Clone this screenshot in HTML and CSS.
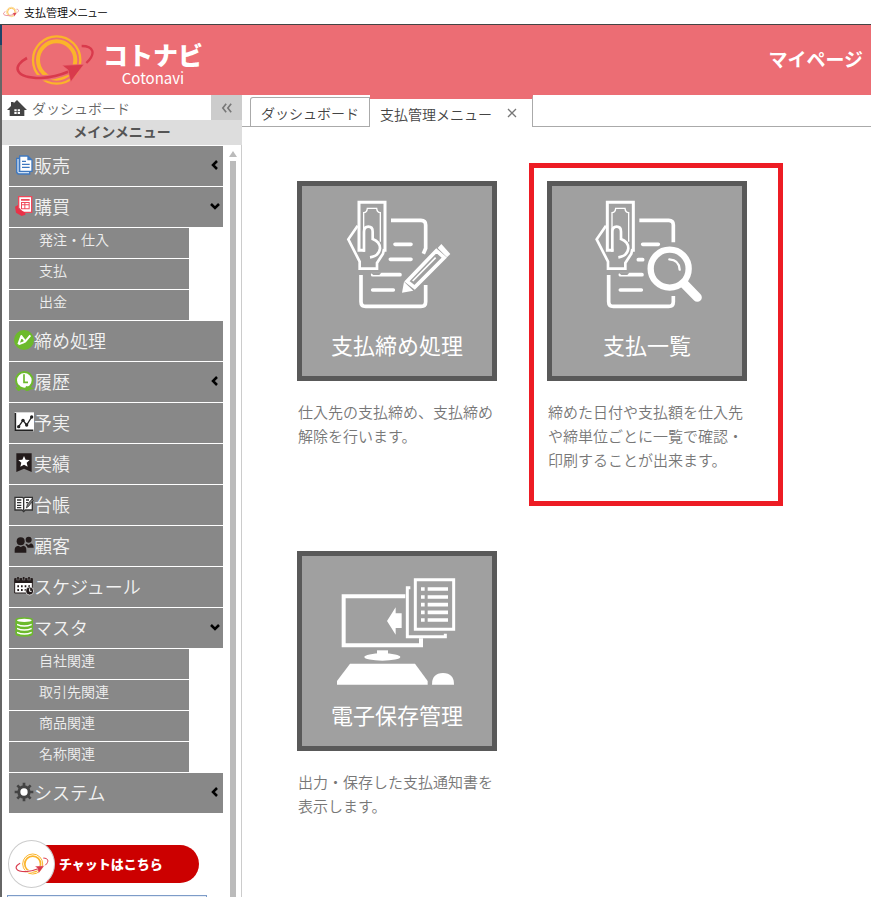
FILE: index.html
```html
<!DOCTYPE html>
<html lang="ja">
<head>
<meta charset="utf-8">
<meta name="viewport" content="width=device-width, initial-scale=1">
<title>支払管理メニュー</title>
<link rel="stylesheet" href="styles.css">
</head>
<body>
<svg class="defs" aria-hidden="true">
  <symbol id="logo" viewBox="45 100 240 156">
    <g fill="none">
      <circle cx="170" cy="178" r="71" stroke="#fbb42a" stroke-width="7"/>
      <circle cx="170" cy="178" r="56" stroke="#fbb42a" stroke-width="12"/>
      <path d="M78 173C36 196 42 232 122 232C150 231 180 224 204 214" stroke="currentColor" stroke-width="17"/>
      <path d="M81 172C36 196 42 232 122 232C150 231 180 224 208 212" stroke="#d93a4c" stroke-width="8"/>
      <path d="M245 136C280 136 290 158 259 187" stroke="#d93a4c" stroke-width="7"/>
    </g>
    <path d="M252 191L186 194L204 208L212 244Z" fill="#d93a4c" stroke="currentColor" stroke-width="2"/>
  </symbol>
  <symbol id="hand" viewBox="0 0 600 600" overflow="visible">
    <g fill="none" stroke="#fff" stroke-width="8">
      <path d="M225 226H207V82H285V230" stroke-width="9"/>
      <path d="M221 218V113Q231 112 232 100H260Q261 112 271 113V200" stroke-width="4"/>
      <path d="M203 152L175 193L209 260V281H261V264L279 236L282 222"/>
      <path d="M222 230V170Q222 155 235 155Q248 155 248 170V192Q270 200 270 220Q267 243 240 247"/>
    </g>
  </symbol>
</svg>

<div class="titlebar">
  <svg class="titlebar-logo" aria-hidden="true"><use href="#logo"/></svg>
  <span>支払管理メニュー</span>
</div>

<div class="window">
  <header class="header">
    <a class="brand" href="#">
      <svg class="brand-mark" aria-hidden="true"><use href="#logo"/></svg>
      <span class="brand-text">
        <span class="brand-name">コトナビ</span>
        <span class="brand-sub">Cotonavi</span>
      </span>
    </a>
    <a class="mypage" href="#">マイページ</a>
  </header>

  <div class="body">
    <aside class="sidebar">
      <div class="dash">
        <a class="dash-link" href="#">
          <svg class="home" viewBox="0 0 60 48" aria-hidden="true"><path d="M30 0L60 30H52V48H8V30H0L12 18V6H20V10Z" fill="#444"/><path d="M22 28h7v6h-7zM32 28h7v6h-7zM22 36h7v6h-7zM32 36h7v6h-7z" fill="#fff"/></svg>
          ダッシュボード
        </a>
        <button class="collapse" type="button" aria-label="メニューを閉じる">
          <svg viewBox="0 0 14 12" aria-hidden="true"><path d="M6 1L2 6L6 11M12 1L8 6L12 11" fill="none" stroke="#777" stroke-width="2"/></svg>
        </button>
      </div>
      <h2 class="menu-title">メインメニュー</h2>
      <div class="menu-area">
        <div class="menu-main">
          <ul class="menu">
            <li><button class="item" type="button">
              <svg class="icon" viewBox="0 0 60 60" aria-hidden="true"><path d="M6 8H15V1H42L56 14V51H49V59H12L6 53Z" fill="#3f78bf"/><path d="M19 5H40V16H52V47H19Z" fill="#fff"/><path d="M10 12H14V51H45V55H14L10 51Z" fill="#cfe0f3"/><path d="M42 4L53 15H42ZM24 17H36V21H24ZM24 26H47V30H24ZM24 35H47V39H24Z" fill="#3f78bf"/></svg>
              販売<svg class="chev" viewBox="0 0 12 12" aria-hidden="true"><path d="M8 2L4 6L8 10"/></svg></button></li>
            <li><button class="item" type="button">
              <svg class="icon" viewBox="0 0 60 60" aria-hidden="true"><path d="M12 0H55V51H30L12 34Z" fill="#f0485a"/><path d="M16 4H51V47H24L16 34Z" fill="#fff"/><path d="M21 9H47V14H21ZM21 18H47V40H21Z" fill="#f0485a"/><path d="M24 21H31V25H24ZM34 21H44V25H34ZM24 28H31V37H24ZM34 28H44V37H34Z" fill="#fff"/><path d="M3 32L12 27V36L34 50V56L23 60L6 50Z" fill="#e93248"/></svg>
              購買<svg class="chev" viewBox="0 0 12 12" aria-hidden="true"><path d="M2 4L6 8L10 4"/></svg></button>
              <ul class="submenu">
                <li><a href="#">発注・仕入</a></li>
                <li><a href="#">支払</a></li>
                <li><a href="#">出金</a></li>
              </ul></li>
            <li><a class="item" href="#">
              <svg class="icon" viewBox="0 0 60 60" aria-hidden="true"><circle cx="30" cy="30" r="30" fill="#6cba2c"/><path d="M13 43L22 18L34 34L49 16M13 43L27 38L34 34" fill="none" stroke="#fff" stroke-width="6" stroke-linejoin="round"/></svg>
              締め処理</a></li>
            <li><button class="item" type="button">
              <svg class="icon" viewBox="0 0 60 60" aria-hidden="true"><circle cx="31" cy="28" r="25" fill="#fff" stroke="#6cba2c" stroke-width="6"/><path d="M30 10V34H42" fill="none" stroke="#6cba2c" stroke-width="5"/><path d="M14 42V59M6 49L14 58L24 49M54 52L37 59L38 48Z" fill="none" stroke="#6cba2c" stroke-width="5"/></svg>
              履歴<svg class="chev" viewBox="0 0 12 12" aria-hidden="true"><path d="M8 2L4 6L8 10"/></svg></button></li>
            <li><a class="item" href="#">
              <svg class="icon" viewBox="0 0 60 60" aria-hidden="true"><path d="M2 1H60V58H2Z" fill="#fff"/><path d="M4 3V55H58" fill="none" stroke="#222" stroke-width="5"/><path d="M14 44L27 25L38 39L53 15" fill="none" stroke="#222" stroke-width="4"/><g fill="#222"><circle cx="14" cy="44" r="5"/><circle cx="27" cy="25" r="5"/><circle cx="38" cy="39" r="5"/><circle cx="53" cy="15" r="5"/></g></svg>
              予実</a></li>
            <li><a class="item" href="#">
              <svg class="icon" viewBox="0 0 60 60" aria-hidden="true"><path d="M7 1H53V57L30 47L7 57Z" fill="#231b1b"/><path d="M30 9L35 20L47 21L38 29L41 41L30 35L19 41L22 29L13 21L25 20Z" fill="#fff"/></svg>
              実績</a></li>
            <li><a class="item" href="#">
              <svg class="icon" viewBox="0 0 60 60" aria-hidden="true"><path d="M3 10H25L29 13L33 10H55V48H34L29 53L24 48H3Z" fill="#fff" stroke="#333" stroke-width="4"/><path d="M29 14V50M9 18H22M9 26H22M9 34H22M9 41H22M36 18H45M36 26H42" stroke="#333" stroke-width="4"/><path d="M37 42L40 31L54 15L58 19L44 37Z" fill="#777" stroke="#222" stroke-width="2"/></svg>
              台帳</a></li>
            <li><a class="item" href="#">
              <svg class="icon" viewBox="0 0 60 60" aria-hidden="true"><g fill="#231b1b"><circle cx="20" cy="19" r="12"/><path d="M2 53V44Q2 33 13 32L20 36L28 32Q37 34 37 44V53Z"/><circle cx="44" cy="14" r="9"/><path d="M37 26L44 30L51 25Q59 28 59 38H41Q39 32 34 29Z"/></g></svg>
              顧客</a></li>
            <li><a class="item" href="#">
              <svg class="icon" viewBox="0 0 60 60" aria-hidden="true"><path d="M2 8H55V51H2Z" fill="#fff" stroke="#231b1b" stroke-width="3"/><path d="M2 7H56V21H2Z" fill="#231b1b"/><path d="M12 2V13M29 2V13M45 2V13" stroke="#888" stroke-width="9"/><path d="M12 3V11M29 3V11M45 3V11" stroke="#231b1b" stroke-width="5"/><path d="M10 31H15M21 31H26M32 31H37M43 31H48M10 42H15M21 42H26M32 42H37" stroke="#231b1b" stroke-width="6"/><circle cx="47" cy="45" r="12" fill="#231b1b" stroke="#fff" stroke-width="2"/><path d="M47 37V46H53" fill="none" stroke="#fff" stroke-width="3"/></svg>
              スケジュール</a></li>
            <li><button class="item" type="button">
              <svg class="icon" viewBox="0 0 60 60" aria-hidden="true"><path d="M4 9Q4 1 31 1Q57 1 57 9V50Q57 59 31 59Q4 59 4 50Z" fill="#6cba2c"/><ellipse cx="31" cy="10" rx="22" ry="5" fill="#fff"/><path d="M9 20Q31 30 53 20V25Q31 34 9 25ZM9 32Q31 42 53 32V37Q31 46 9 37ZM9 44Q31 54 53 44V49Q31 58 9 49Z" fill="#fff"/></svg>
              マスタ<svg class="chev" viewBox="0 0 12 12" aria-hidden="true"><path d="M2 4L6 8L10 4"/></svg></button>
              <ul class="submenu">
                <li><a href="#">自社関連</a></li>
                <li><a href="#">取引先関連</a></li>
                <li><a href="#">商品関連</a></li>
                <li><a href="#">名称関連</a></li>
              </ul></li>
            <li><button class="item" type="button">
              <svg class="icon" viewBox="0 0 60 60" aria-hidden="true"><path d="M30 2V58M2 30H58M10 10L50 50M50 10L10 50" stroke="#444" stroke-width="8"/><circle cx="30" cy="30" r="20" fill="#444"/><circle cx="30" cy="30" r="11" fill="#fff"/></svg>
              システム<svg class="chev" viewBox="0 0 12 12" aria-hidden="true"><path d="M8 2L4 6L8 10"/></svg></button></li>
          </ul>
          <a class="chat" href="#">
            <span class="chat-badge"><svg aria-hidden="true"><use href="#logo"/></svg></span>
            <span class="chat-label">チャットはこちら</span>
          </a>
          <div class="notice"></div>
        </div>
        <div class="scroll" aria-hidden="true">
          <span class="scroll-up"></span>
          <span class="scroll-thumb"></span>
        </div>
      </div>
    </aside>

    <main class="main">
      <nav class="tabs">
        <a class="tab" href="#">ダッシュボード</a>
        <div class="tab tab-active">
          <a href="#">支払管理メニュー</a>
          <button class="tab-close" type="button" aria-label="閉じる"><svg viewBox="0 0 10 10" aria-hidden="true"><path d="M1 1L9 9M9 1L1 9" stroke="#777" stroke-width="1.3"/></svg></button>
        </div>
      </nav>
      <section class="cards">
        <article class="card">
          <a class="tile" href="#">
            <svg viewBox="36 33 570 420" aria-hidden="true">
              <g fill="none" stroke="#fff" stroke-width="11">
                <path d="M303 136H393Q407 136 407 150V220L400 236M407 330V380Q407 394 393 394H227Q213 394 213 380V300"/>
                <path d="M315 208H363M301 253H363M248 299H330M248 345H310" stroke-linecap="round"/>
              </g>
              <path d="M240 292H275L268 300H250Z" fill="#a0a0a0"/>
              <use href="#hand" width="600" height="600"/>
              <path d="M351 319L439 227L463 248L374 337Z" fill="none" stroke="#fff" stroke-width="11"/>
              <path d="M368 318L437 248" stroke="#fff" stroke-width="5"/>
              <path d="M454 207L481 237L471 247L443 219ZM342 320L370 347L336 353Z" fill="#fff"/>
            </svg>
            <span>支払締め処理</span>
          </a>
          <p>仕入先の支払締め、支払締め解除を行います。</p>
        </article>
        <article class="card card-marked">
          <a class="tile" href="#">
            <svg viewBox="81 93 570 420" aria-hidden="true">
              <g fill="none" stroke="#fff" stroke-width="11">
                <path d="M343 196H431Q445 196 445 210V262M445 423V440Q445 454 431 454H265Q251 454 251 440V360"/>
                <path d="M353 268H400M340 314H353M286 359H351M286 405H349" stroke-linecap="round"/>
              </g>
              <path d="M279 352H314L307 360H289Z" fill="#a0a0a0"/>
              <use href="#hand" x="40" y="60" width="600" height="600"/>
              <g fill="none" stroke="#fff" stroke-linecap="round">
                <circle cx="434" cy="341" r="57" stroke-width="19"/>
                <path d="M433 313Q463 315 464 344" stroke-width="7"/>
                <path d="M478 387L517 427" stroke-width="27"/>
              </g>
            </svg>
            <span>支払一覧</span>
          </a>
          <p>締めた日付や支払額を仕入先や締単位ごとに一覧で確認・印刷することが出来ます。</p>
        </article>
        <article class="card">
          <a class="tile" href="#">
            <svg viewBox="36 33 570 420" aria-hidden="true">
              <g fill="none" stroke="#fff">
                <path d="M346 154H161V301H393V280" stroke-width="12"/>
                <path d="M361 128H352V275H466V266M376 104H491V253H376Z" stroke-width="9"/>
                <path d="M413 132H474M413 156H474M413 179H474M413 202H474M413 225H474M393 132H404M393 156H404M393 179H404M393 202H404M393 225H404" stroke-width="11"/>
              </g>
              <g fill="#fff">
                <path d="M291 228L317 187V205H335V249H317V269Z"/>
                <path d="M261 316H294V328H261Z"/>
                <ellipse cx="277" cy="336" rx="54" ry="11"/>
                <path d="M180 356H375L413 408V419H141V408Z"/>
                <path d="M426 419Q426 384 459 384Q492 384 492 419Z"/>
              </g>
            </svg>
            <span>電子保存管理</span>
          </a>
          <p>出力・保存した支払通知書を表示します。</p>
        </article>
      </section>
    </main>
  </div>
</div>
</body>
</html>
```
FILE: styles.css
```css
* {
  box-sizing: border-box;
}

body {
  margin: 0;
  height: 100vh;
  display: flex;
  flex-direction: column;
  overflow: hidden;
  background: #fff;
  color: #444;
  font-family: "Noto Sans CJK JP", sans-serif;
  font-size: 14px;
  font-weight: 350;
}

a {
  color: inherit;
  text-decoration: none;
}

button {
  border: 0;
  padding: 0;
  background: none;
  color: inherit;
  font: inherit;
  text-align: left;
  cursor: pointer;
}

ul {
  list-style: none;
  margin: 0;
  padding: 0;
}

svg {
  display: block;
  flex: none;
}

.defs {
  position: absolute;
  width: 0;
  height: 0;
}

.titlebar {
  flex: none;
  height: 24px;
  display: flex;
  align-items: center;
  gap: 5px;
  padding-left: 3px;
  color: #000;
  font-size: 11px;
  line-height: 22px;
  font-feature-settings: "palt";
}

.titlebar-logo {
  width: 16px;
  height: 12px;
  color: #fff;
}

.window {
  flex: 1;
  min-height: 0;
  display: flex;
  flex-direction: column;
  padding-left: 2px;
  border-top: 1px solid #444;
  background: linear-gradient(#1d4468 20px, #666 20px);
}

.header {
  flex: none;
  height: 70px;
  display: flex;
  align-items: center;
  justify-content: space-between;
  padding: 0 8px 0 13px;
  background: #ec6d74;
  color: #fff;
}

.brand {
  display: flex;
  align-items: center;
  gap: 8px;
}

.brand-mark {
  width: 80px;
  height: 52px;
  color: #ec6d74;
}

.brand-text {
  display: flex;
  flex-direction: column;
  align-items: center;
  padding-top: 6px;
}

.brand-name {
  font-size: 25px;
  font-weight: 900;
  line-height: 30px;
}

.brand-sub {
  font-size: 15px;
  font-weight: 400;
  line-height: 18px;
}

.mypage {
  padding-bottom: 4px;
  font-size: 19px;
  font-weight: 700;
}

.body {
  flex: 1;
  min-height: 0;
  display: flex;
  background: #fff;
}

.sidebar {
  flex: none;
  width: 240px;
  display: flex;
  flex-direction: column;
}

.dash {
  flex: none;
  display: flex;
  height: 25px;
}

.dash-link {
  flex: 1;
  display: flex;
  align-items: center;
  gap: 5px;
  padding-left: 5px;
  color: #666;
  line-height: 22px;
}

.home {
  width: 20px;
  height: 16px;
}

.collapse {
  width: 31px;
  display: flex;
  align-items: center;
  justify-content: center;
  background: #ccc;
}

.collapse svg {
  width: 14px;
  height: 10px;
}

.menu-title {
  flex: none;
  height: 25px;
  margin: 0;
  background: #ddd;
  color: #555;
  font-size: 14px;
  font-weight: 700;
  line-height: 23px;
  text-align: center;
}

.menu-area {
  flex: 1;
  min-height: 0;
  display: flex;
  gap: 7px;
  padding: 1px 5px 0 7px;
  border-right: 1px solid #ccc;
  overflow: hidden;
}

.menu-main {
  flex: 1;
}

.item {
  width: 100%;
  height: 40px;
  margin-bottom: 1px;
  padding: 0 2px 2px 5px;
  display: flex;
  align-items: center;
  background: #888;
  color: #f2f2f2;
  font-size: 18px;
}

.icon {
  width: 20px;
  height: 20px;
}

.chev {
  width: 12px;
  height: 12px;
  margin-left: auto;
  fill: none;
  stroke: #000;
  stroke-width: 2.5;
}

.submenu a {
  display: block;
  width: 180px;
  height: 30px;
  margin-bottom: 1px;
  padding-left: 30px;
  background: #888;
  color: #eee;
  line-height: 23px;
}

.chat {
  display: flex;
  align-items: center;
  margin: 27px 0 0 -1px;
}

.chat-badge {
  z-index: 1;
  flex: none;
  display: flex;
  align-items: center;
  justify-content: center;
  width: 47px;
  height: 48px;
  border: 1px solid #ccc;
  border-radius: 50%;
  background: #fff;
  color: #fff;
}

.chat-badge svg {
  width: 34px;
  height: 22px;
}

.chat-label {
  width: 154px;
  margin-left: -10px;
  padding-left: 14px;
  border-radius: 0 19px 19px 0;
  background: #c00;
  color: #fff;
  font-size: 13px;
  font-weight: 900;
  line-height: 38px;
}

.notice {
  width: 200px;
  height: 40px;
  margin: 7px 0 0 -2px;
  border: 1px solid #7d9cc8;
  background: #e8eef6;
}

.scroll {
  flex: none;
  width: 6px;
  display: flex;
  flex-direction: column;
  align-items: center;
  gap: 4px;
  padding-top: 5px;
}

.scroll-up {
  border: 4px solid transparent;
  border-top: 0;
  border-bottom: 6px solid #bbb;
}

.scroll-thumb {
  flex: 1;
  width: 6px;
  background: #bbb;
}

.main {
  flex: 1;
  min-width: 0;
}

.tabs {
  display: flex;
  height: 32px;
  padding-left: 8px;
  border-bottom: 1px solid #aaa;
}

.tab {
  height: 30px;
  margin-top: 2px;
  padding: 0 10px;
  border: 1px solid #aaa;
  border-bottom: 0;
  border-radius: 3px 0 0 0;
  line-height: 30px;
}

.tab-active {
  display: flex;
  gap: 13px;
  height: 32px;
  margin-top: 0;
  padding-right: 13px;
  border-width: 4px 1px 0 0;
  border-top-color: #ec6d74;
  border-radius: 0;
  background: #fff;
}

.tab-close {
  width: 14px;
  display: flex;
  align-items: center;
  justify-content: center;
}

.tab-close svg {
  width: 10px;
  height: 10px;
}

.cards {
  display: grid;
  grid-template-columns: repeat(auto-fill, 200px);
  gap: 79px 50px;
  padding: 54px 55px;
}

.card {
  position: relative;
}

.card-marked::after {
  content: "";
  position: absolute;
  inset: -18px -36px -34px -18px;
  border: 5px solid #ed1c24;
  pointer-events: none;
}

.tile {
  display: flex;
  flex-direction: column;
  height: 200px;
  border: 5px solid #595959;
  background: #a0a0a0;
  color: #fff;
  font-size: 22px;
  font-weight: 400;
  line-height: 36px;
  text-align: center;
}

.tile svg {
  width: 100%;
  height: 140px;
}

.card p {
  margin: 0;
  padding: 19px 2px 0 1px;
  color: #777;
  font-size: 15px;
  line-height: 24px;
}
```
